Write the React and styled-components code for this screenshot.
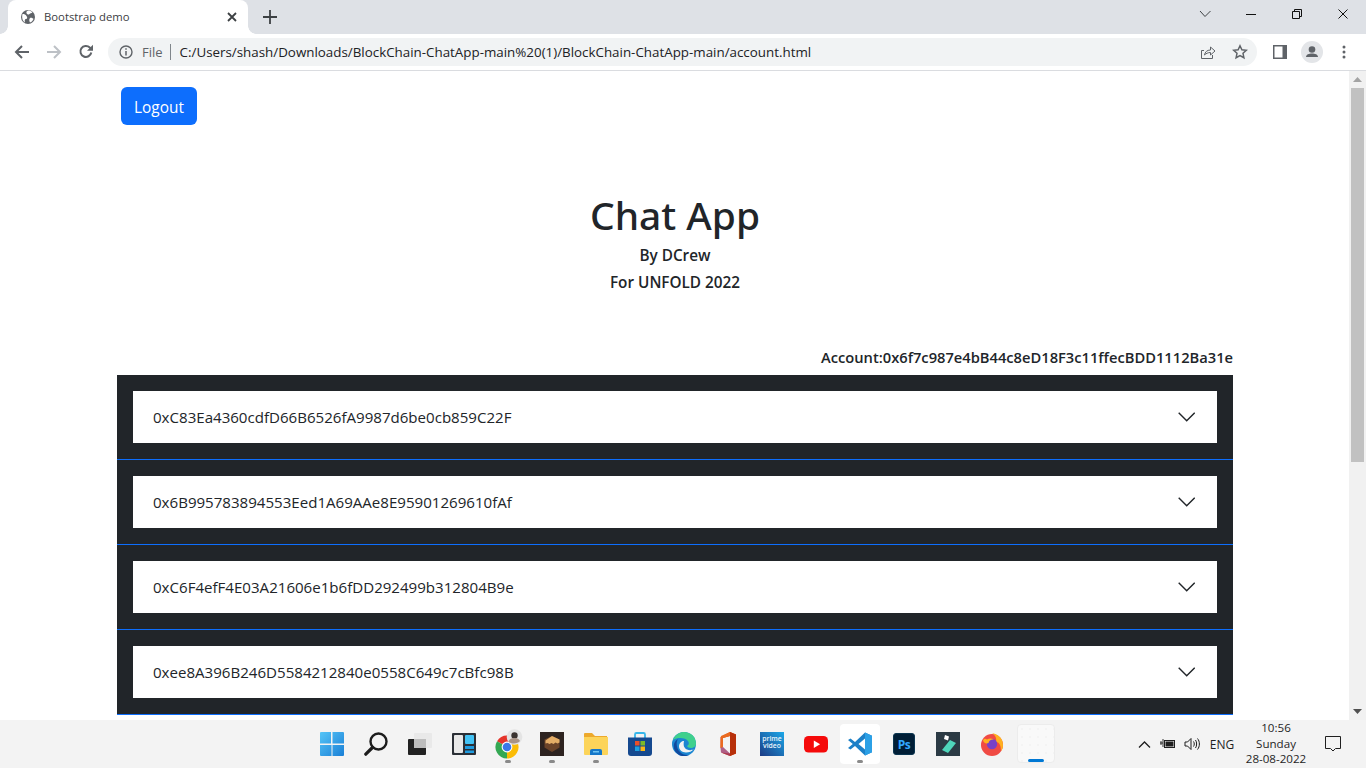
import React from "react";
import styled, { createGlobalStyle } from "styled-components";

const Global = createGlobalStyle`
  html, body { margin: 0; padding: 0; height: 100%; overflow: hidden; background: #fff; }
  * { box-sizing: border-box; }
  body { font-family: "Open Sans", "Noto Sans", sans-serif; color: #212529; }
`;

const Shell = styled.div`
  width: 1366px; height: 768px; display: flex; flex-direction: column; overflow: hidden;
`;
const TabStrip = styled.div`
  height: 34px; flex: none; background: #dee1e6; display: flex; align-items: stretch; padding-left: 8px;
`;
const Tab = styled.div`
  position: relative; width: 240px; background: #fff; border-radius: 8px 8px 0 0;
  display: flex; align-items: center; padding: 0 10px 1px 12px; gap: 8px;
  &::before, &::after { content: ""; position: absolute; bottom: 0; width: 8px; height: 8px; }
  &::before { left: -8px; background: radial-gradient(circle at 0 0, transparent 7.5px, #fff 8px); }
  &::after { right: -8px; background: radial-gradient(circle at 100% 0, transparent 7.5px, #fff 8px); }
`;
const TabTitle = styled.span`
  flex: 1; font-size: 11.3px; color: #3c4043; font-family: "Open Sans", sans-serif;
`;
const NewTab = styled.button`
  width: 28px; height: 28px; margin: 3px 0 0 8px; border: 0; background: none; padding: 0;
  display: flex; align-items: center; justify-content: center;
`;
const WindowControls = styled.div`
  margin-left: auto; display: flex; align-items: flex-start; height: 34px;
`;
const WinBtn = styled.div`
  width: 46px; height: 28px; display: flex; align-items: center; justify-content: center;
`;
const Toolbar = styled.div`
  height: 37px; flex: none; background: #fff; border-bottom: 1px solid #dadce0;
  display: flex; align-items: center; padding-left: 6px;
`;
const NavBtn = styled.div`
  width: 32px; height: 28px; display: flex; align-items: center; justify-content: center;
`;
const Omnibox = styled.div`
  width: 1149px; height: 28px; margin-left: 6px; background: #f1f3f4; border-radius: 14px;
  display: flex; align-items: center; padding: 0 1px 0 11px; font-size: 13.37px;
`;
const Scheme = styled.span`
  color: #5f6368; margin-left: 9px; font-size: 13px;
`;
const Sep = styled.span`
  width: 1px; height: 16px; background: #80868b; margin: 0 9px 0 7px;
`;
const Url = styled.span`
  flex: 1; color: #202124; white-space: nowrap;
`;
const OmniIcon = styled.div`
  width: 32px; height: 28px; display: flex; align-items: center; justify-content: center; flex: none;
`;
const ToolRight = styled.div`
  display: flex; align-items: center; margin-left: 7px;
`;
const ToolIcon = styled.div`
  width: 32px; height: 28px; display: flex; align-items: center; justify-content: center;
`;
const Viewport = styled.div`
  flex: 1; min-height: 0; display: flex; overflow: hidden;
`;
const Page = styled.main`
  flex: 1; min-width: 0; padding: 16px 0 0 117px; overflow: hidden;
`;
const Container = styled.div`
  width: 1116px;
`;
const LogoutButton = styled.button`
  display: block; margin-left: 4px; width: 76px; height: 38px; border: 0; border-radius: 6px;
  background: #0d6efd; color: #fff; font: 400 15.4px "Open Sans", sans-serif; padding: 2px 0 0;
`;
const Hero = styled.header`
  margin-top: 64px; text-align: center; height: 143px;
`;
const Title = styled.h1`
  margin: 0; font-family: "Noto Sans", "Open Sans", sans-serif; font-size: 38.9px; line-height: 52px; font-weight: 500; color: #212529;
`;
const Sub = styled.p`
  margin: 0; font-size: 15.3px; font-weight: 600; line-height: 27px; color: #212529;
  &:first-of-type { margin-top: 1px; }
`;
const Account = styled.div`
  margin-top: 13px; height: 24px; line-height: 24px; text-align: right; font-size: 14.7px; font-weight: 600; white-space: nowrap;
`;
const Accordion = styled.section`
  margin-top: 6px; background: #212529;
`;
const Item = styled.div`
  padding: 16px; height: 85px; border-bottom: 1px solid #0d6efd;
`;
const ItemButton = styled.div`
  height: 52px; background: #fff; display: flex; align-items: center; justify-content: space-between;
  padding: 0 22px 0 20px; font-size: 15.08px; color: #212529;
`;
const Scrollbar = styled.aside`
  width: 17px; flex: none; background: #f1f1f1; display: flex; flex-direction: column; align-items: center;
`;
const Arrow = styled.div`
  width: 17px; height: 17px; display: flex; align-items: center; justify-content: center; flex: none;
`;
const Thumb = styled.div`
  width: 13px; height: 374px; background: #c1c1c1;
`;
const Spacer = styled.div`
  flex: 1;
`;
const Taskbar = styled.footer`
  height: 48px; flex: none; background: #f3f3f3; display: flex; padding: 0 11px 0 310px;
`;
const TaskIcons = styled.div`
  display: flex; align-items: stretch;
`;
const TaskItem = styled.div`
  position: relative; width: 44px; display: flex; align-items: center; justify-content: center;
`;
const TaskGlyph = styled.span`
  position: relative; display: flex;
`;
const ActiveBg = styled.div`
  position: absolute; left: 2px; top: 4px; width: 40px; height: 40px; background: #fff; border-radius: 4px;
`;
const BlankBg = styled(ActiveBg)`
  left: 3px; width: 38px; height: 39px; border: 1px solid #ececec;
  background: #f9f9f9 radial-gradient(#efefef 0.5px, transparent 1px) 0 0 / 8px 8px;
`;
const Dot = styled.i`
  position: absolute; left: 50%; bottom: 5px; width: 6px; height: 3px; margin-left: -3px; border-radius: 2px; background: #8a8a8a;
`;
const Accent = styled.i`
  position: absolute; left: 10px; bottom: 0; width: 16px; height: 3px; border-radius: 2px; background: #0078d4;
`;
const PrimeBox = styled.div`
  width: 24px; height: 24px; background: linear-gradient(45deg, #1c3a84, #1ba7e8); color: #eaf6fc;
  font: 600 6.8px/7px "Open Sans", sans-serif; display: flex; flex-direction: column; align-items: center; padding-top: 3px;
`;
const Tray = styled.div`
  margin-left: auto; display: flex; align-items: center; color: #1f1f1f;
  font: 400 11.6px "Open Sans", sans-serif;
`;
const TrayIcon = styled.div`
  width: 24px; display: flex; align-items: center; justify-content: center;
`;
const Lang = styled.span`
  width: 34px; text-align: center; margin-left: 1px; font-size: 12px;
`;
const Clock = styled.div`
  width: 70px; margin-left: 2px; text-align: center; line-height: 15.5px; margin-top: -1px; white-space: nowrap;
`;
const Notify = styled.div`
  width: 44px; display: flex; justify-content: center;
`;

const Globe = () => (
  <svg width="16" height="16" viewBox="0 0 16 16">
    <circle cx="8" cy="8" r="7" fill="#5f6368" />
    <path d="M2.5 5c2 0 3 .5 4 2s1 3-.5 3-1.500 2-1 3.500C3 12.500 1.500 9 2.500 5zM8 1.500c2 0 3 .5 4.500 2-1.500 1-2 .5-3 1.500S7 5.500 6.500 4 7 2 8 1.500zM10 9c1.500-.5 3 .5 3.500 1-.5 1.500-2 3-3.500 3.500-1-1.500-1-3.500 0-4.500z" fill="#fff" />
  </svg>
);
const Line = ({ d, w = 16, h = 16, c = "#5f6368", s = 2 }) => (
  <svg width={w} height={h} viewBox={`0 0 ${w} ${h}`} fill="none" stroke={c} strokeWidth={s}><path d={d} /></svg>
);

const Windows = () => (
  <svg width="24" height="24" viewBox="0 0 24 24">
    <defs><linearGradient id="w" x1="0" y1="0" x2="1" y2="1"><stop offset="0" stopColor="#55c5f7" /><stop offset="1" stopColor="#1a7fd6" /></linearGradient></defs>
    <path d="M0 1a1 1 0 0 1 1-1h10v11.500H0zM12.500 0H23a1 1 0 0 1 1 1v10.500H12.500zM0 13h11.500v11H1a1 1 0 0 1-1-1zM12.500 13H24v10a1 1 0 0 1-1 1H12.500z" fill="url(#w)" />
  </svg>
);
const Search = () => (
  <svg width="24" height="24" viewBox="0 0 24 24" fill="none" stroke="#1c1c1c">
    <circle cx="14.500" cy="9.500" r="8" strokeWidth="2.400" /><path d="M8.500 15.500L1.800 22.200" strokeWidth="3.200" strokeLinecap="round" />
  </svg>
);
const TaskView = () => (
  <svg width="24" height="24" viewBox="0 0 24 24">
    <rect x="6" y="1" width="18" height="15" rx="1" fill="#e9e9e9" />
    <rect x="0" y="7" width="18" height="16" rx="1" fill="#222" />
    <rect x="6" y="7" width="12" height="9" fill="#bdbdbd" />
  </svg>
);
const Widgets = () => (
  <svg width="24" height="24" viewBox="0 0 24 24">
    <rect width="24" height="22" y="1" rx="1" fill="#2b2f36" />
    <rect x="2" y="3" width="9" height="18" rx="1" fill="#e8e8e8" />
    <rect x="13" y="3" width="9" height="9" rx="1" fill="#43c3f5" />
    <rect x="13" y="14" width="9" height="3" fill="#1f9ce0" />
    <rect x="13" y="18.500" width="9" height="2.500" fill="#1f9ce0" />
  </svg>
);
const Chrome = () => (
  <svg width="30" height="30" viewBox="-2 -1 30 30">
    <path d="M12 17L2.040 11.250A11.500 11.500 0 0 1 21.960 11.250z" fill="#e5352b" />
    <path d="M12 17L12 28.500A11.500 11.500 0 0 1 2.040 11.250z" fill="#34a853" />
    <path d="M12 17L21.960 11.250A11.500 11.500 0 0 1 12 28.500z" fill="#fbbc05" />
    <circle cx="12" cy="17" r="5.400" fill="#fff" /><circle cx="12" cy="17" r="4.300" fill="#3b78e7" />
    <circle cx="19.500" cy="7" r="7.800" fill="#e4e4e4" />
    <circle cx="19.500" cy="5.500" r="3.200" fill="#3a3330" />
    <path d="M13.500 11.500c1-3 3-3.500 6-3.500s4.500 1 5.500 3c-2 3-9 3.500-11.500.5z" fill="#a89386" />
  </svg>
);
const Block = () => (
  <svg width="24" height="24" viewBox="0 0 24 24">
    <rect width="24" height="24" fill="#2d2320" />
    <path d="M12 4l7.500 3.500v8L12 20l-7.500-4.500v-8z" fill="#6b4329" />
    <path d="M12 4l7.500 3.500v3l-2 1-2-1-2 1.500-2-1-2 1-2-1-2 .5v-3z" fill="#e4ad67" />
  </svg>
);
const Folder = () => (
  <svg width="24" height="24" viewBox="0 0 24 24">
    <path d="M0 2a1 1 0 0 1 1-1h7l3 3h12v3H0z" fill="#eda92c" />
    <path d="M0 5h24v17a1 1 0 0 1-1 1H1a1 1 0 0 1-1-1z" fill="#fcd45a" />
    <path d="M6 23v-4a2 2 0 0 1 2-2h8a2 2 0 0 1 2 2v4z" fill="#1577c9" />
    <rect x="9" y="19" width="6" height="1.500" fill="#6ec3f2" />
  </svg>
);
const Store = () => (
  <svg width="24" height="24" viewBox="0 0 24 24">
    <path d="M7 6V2.500A1.500 1.500 0 0 1 8.500 1h7A1.500 1.500 0 0 1 17 2.500V6" fill="none" stroke="#36b6ea" strokeWidth="1.800" />
    <path d="M0 5.500h24V21a3 3 0 0 1-3 3H3a3 3 0 0 1-3-3z" fill="#15498f" />
    <rect x="7" y="9" width="4.500" height="4.500" fill="#e8502a" /><rect x="12.500" y="9" width="4.500" height="4.500" fill="#7cb928" />
    <rect x="7" y="14.500" width="4.500" height="4.500" fill="#1ba1e2" /><rect x="12.500" y="14.500" width="4.500" height="4.500" fill="#fbb714" />
  </svg>
);
const Edge = () => (
  <svg width="24" height="24" viewBox="0 0 24 24">
    <circle cx="12" cy="12" r="12" fill="#1b86d1" />
    <path d="M1 8C3 2.500 8 0 12 0c7 0 12 5 12 11.500 0 3-2.500 4.500-5 4.500-2 0-3.500-1-4-2 2-1 2.500-3 1-5C14 6.500 7 4.500 1 8z" fill="#3fd08d" />
    <path d="M12 9c-3 0-5 2.500-5 5.500s3 6 7 6c3 0 6-1 8-3.500-2 1.500-5 1.500-7 .5-3-1.500-4-4-3-8.500z" fill="#f3f3f3" />
    <path d="M3 19c-2.500-5-1-10 3-12-2 3-2 9 2 13 2 2 5 3.500 9 3C12 25.500 6 24 3 19z" fill="#114a9e" />
  </svg>
);
const Office = () => (
  <svg width="24" height="24" viewBox="0 0 24 24">
    <path d="M14 0l6 2.500v19L14 24 5 20.500l9 1V4l-7 2v9l-2.500 1V5z" fill="#d83b01" />
    <path d="M14 0l6 2.500v19L14 24z" fill="#b7300a" />
    <path d="M4.500 16L7 15V6l7-2V0L5 4z" fill="#ea6a20" />
    <path d="M4.500 16l2.500-1 7 6.500V24l-9-3.500z" fill="#9e3a6a" opacity=".8" />
  </svg>
);
const Prime = () => (
  <PrimeBox>
    <span>prime</span>
    <span>video</span>
  </PrimeBox>
);
const YouTube = () => (
  <svg width="24" height="24" viewBox="0 0 24 24">
    <rect x="0" y="4" width="24" height="16.500" rx="4.500" fill="#f50a0a" />
    <path d="M9.800 8.500v7.500l6.300-3.750z" fill="#fff" />
  </svg>
);
const VSCode = () => (
  <svg width="24" height="24" viewBox="0 0 24 24">
    <path d="M17 .5l7 3.300v16.400L17 23.500 7 14l-4.500 3.500L0 16l4.800-4.100L0 8l2.500-1.500L7 10z" fill="#1d80c7" />
    <path d="M17 .5l7 3.300v16.400L17 23.500z" fill="#2ba0e6" />
    <path d="M17 6.500L10.500 12l6.500 5.500z" fill="#fff" />
  </svg>
);
const PS = styled.div`
  width: 22px; height: 22px; background: #001e36; border-radius: 3px; border: 1px solid #0a3550;
  color: #31a8ff; font: 700 12px "Open Sans", sans-serif; display: flex; align-items: center; justify-content: center; letter-spacing: -0.4px;
`;
const Filmora = () => (
  <svg width="24" height="24" viewBox="0 0 24 24">
    <rect width="24" height="24" fill="#2b3a44" />
    <path d="M9 3l4 1.500-1 4L8 7z" fill="#fff" />
    <path d="M14 8l6 3-8 10-6-3z" fill="#4fd6bb" />
  </svg>
);
const Firefox = () => (
  <svg width="24" height="24" viewBox="0 0 24 24">
    <circle cx="12" cy="13" r="11" fill="#f04a44" />
    <path d="M12 1c5 1 11 4 11 12 0 3-1 5-2 6 0-6-2-9-5-9 1-4-1-7-4-9z" fill="#ffb01f" />
    <circle cx="12" cy="12" r="5.200" fill="#7840c8" />
    <path d="M3 8c2-2 3-1 4-.5 2-1.500 5-1.500 7 0-3-.5-5 1-5.500 3.500C6 12 3.500 11 3 8z" fill="#ffb01f" />
  </svg>
);

const accounts = [
  "0xC83Ea4360cdfD66B6526fA9987d6be0cb859C22F",
  "0x6B995783894553Eed1A69AAe8E95901269610fAf",
  "0xC6F4efF4E03A21606e1b6fDD292499b312804B9e",
  "0xee8A396B246D5584212840e0558C649c7cBfc98B",
];

const taskApps = [
  { el: <Windows /> },
  { el: <Search /> },
  { el: <TaskView /> },
  { el: <Widgets /> },
  { el: <Chrome />, dot: true },
  { el: <Block />, dot: true },
  { el: <Folder />, dot: true },
  { el: <Store /> },
  { el: <Edge /> },
  { el: <Office /> },
  { el: <Prime /> },
  { el: <YouTube /> },
  { el: <VSCode />, dot: true, active: true },
  { el: <PS>Ps</PS> },
  { el: <Filmora /> },
  { el: <Firefox /> },
  { el: null, blank: true },
];

export default function App() {
  return (
    <Shell>
      <Global />
      <TabStrip>
        <Tab>
          <Globe />
          <TabTitle>Bootstrap demo</TabTitle>
          <Line d="M2 2l8 8M10 2l-8 8" w={12} h={12} c="#3c4043" s={1.8} />
        </Tab>
        <NewTab><Line d="M7 0v14M0 7h14" w={14} h={14} c="#3c4043" s={1.8} /></NewTab>
        <WindowControls>
          <WinBtn><Line d="M1 1l5 5.500L11.500 1" w={12} h={8} c="#3c4043" s={1} /></WinBtn>
          <WinBtn><Line d="M0 .5h10" w={10} h={1} c="#111" s={1} /></WinBtn>
          <WinBtn><Line d="M.5 2.500h7v7h-7zM2.500 2.500v-2h7v7h-2" w={10} h={10} c="#111" s={1} /></WinBtn>
          <WinBtn><Line d="M.5.5l9 9M9.500.5l-9 9" w={10} h={10} c="#111" s={1} /></WinBtn>
        </WindowControls>
      </TabStrip>
      <Toolbar>
        <NavBtn><Line d="M15 8H2M8 2L2 8l6 6" c="#5f6368" /></NavBtn>
        <NavBtn><Line d="M1 8h13M8 2l6 6-6 6" c="#bdc1c6" /></NavBtn>
        <NavBtn>
          <svg width="16" height="16" viewBox="0 0 16 16" fill="none"><path d="M13.300 8.500A5.500 5.500 0 1 1 11.800 3.500L14 5.500" stroke="#5f6368" strokeWidth="2" /><path d="M15 0.800v6h-6z" fill="#5f6368" /></svg>
        </NavBtn>
        <Omnibox>
          <svg width="14" height="14" viewBox="0 0 14 14" fill="none"><circle cx="7" cy="7" r="6" stroke="#5f6368" strokeWidth="1.400" /><path d="M7 6v4.500M7 3.300v1.500" stroke="#5f6368" strokeWidth="1.500" /></svg>
          <Scheme>File</Scheme>
          <Sep />
          <Url>C:/Users/shash/Downloads/BlockChain-ChatApp-main%20(1)/BlockChain-ChatApp-main/account.html</Url>
          <OmniIcon>
            <svg width="16" height="16" viewBox="0 0 16 16" fill="none" stroke="#5f6368" strokeWidth="1"><path d="M4 6.500H1.500v8h11V11" /><path d="M4.500 11c.5-3 2.500-5 6-5V3l4.500 4-4.500 4V8.500c-2.500 0-4.500 1-6 2.500z" /></svg>
          </OmniIcon>
          <OmniIcon>
            <svg width="16" height="16" viewBox="0 0 16 16" fill="none" stroke="#5f6368" strokeWidth="1.500"><path d="M8 1.800l1.900 4 4.400.5-3.300 3 .9 4.400L8 11.500l-3.900 2.200.9-4.400-3.300-3 4.400-.5z" /></svg>
          </OmniIcon>
        </Omnibox>
        <ToolRight>
          <ToolIcon>
            <svg width="14" height="14" viewBox="0 0 14 14"><rect width="14" height="14" fill="#5f6368" /><rect x="1.500" y="1.500" width="8" height="11" fill="#fff" /></svg>
          </ToolIcon>
          <ToolIcon>
            <svg width="22" height="22" viewBox="0 0 22 22"><circle cx="11" cy="11" r="11" fill="#e3e5e8" /><circle cx="11" cy="8.500" r="3.300" fill="#5f6368" /><path d="M5 16c0-2.500 3-3.500 6-3.500s6 1 6 3.500z" fill="#5f6368" /></svg>
          </ToolIcon>
          <ToolIcon>
            <svg width="4" height="14" viewBox="0 0 4 14" fill="#5f6368"><circle cx="2" cy="2" r="1.500" /><circle cx="2" cy="7" r="1.500" /><circle cx="2" cy="12" r="1.500" /></svg>
          </ToolIcon>
        </ToolRight>
      </Toolbar>
      <Viewport>
        <Page>
          <Container>
            <LogoutButton>Logout</LogoutButton>
            <Hero>
              <Title>Chat App</Title>
              <Sub>By DCrew</Sub>
              <Sub>For UNFOLD 2022</Sub>
            </Hero>
            <Account>Account:0x6f7c987e4bB44c8eD18F3c11ffecBDD1112Ba31e</Account>
            <Accordion>
              {accounts.map(a => (
                <Item key={a}>
                  <ItemButton>
                    <span>{a}</span>
                    <Line d="M.7.7l8 8 8-8" w={17} h={10} c="#212529" s={1.400} />
                  </ItemButton>
                </Item>
              ))}
            </Accordion>
          </Container>
        </Page>
        <Scrollbar>
          <Arrow><svg width="9" height="5"><path d="M4.500 0L9 5H0z" fill="#a3a3a3" /></svg></Arrow>
          <Thumb />
          <Spacer />
          <Arrow><svg width="9" height="5"><path d="M4.500 5L9 0H0z" fill="#505050" /></svg></Arrow>
        </Scrollbar>
      </Viewport>
      <Taskbar>
        <TaskIcons>
          {taskApps.map((t, i) => (
            <TaskItem key={i}>
              {t.active && <ActiveBg />}
              {t.blank && <BlankBg><Accent /></BlankBg>}
              {t.el && <TaskGlyph>{t.el}</TaskGlyph>}
              {t.dot && <Dot />}
            </TaskItem>
          ))}
        </TaskIcons>
        <Tray>
          <TrayIcon><Line d="M1 7.500l5.500-5.500L12 7.500" w={13} h={9} c="#1f1f1f" s={1.300} /></TrayIcon>
          <TrayIcon>
            <svg width="16" height="12" viewBox="0 0 16 12" fill="none" stroke="#1f1f1f"><path d="M0 5h3M1 3v4M3 1v8" strokeWidth=".9" /><rect x="4.500" y="2.500" width="10" height="7" strokeWidth="1" /><rect x="5.500" y="3.500" width="8" height="5" fill="#1f1f1f" stroke="none" /></svg>
          </TrayIcon>
          <TrayIcon>
            <svg width="17" height="14" viewBox="0 0 17 14" fill="none" stroke="#1f1f1f" strokeWidth="1"><path d="M1 5h2.500L7 1.500v11L3.500 9H1zM9.500 4.500c1 1.500 1 3.500 0 5M11.500 3c1.500 2 1.500 6 0 8M13.500 1.500c2.500 3 2.500 8 0 11" /></svg>
          </TrayIcon>
          <Lang>ENG</Lang>
          <Clock>10:56<br />Sunday<br />28-08-2022</Clock>
          <Notify>
            <svg width="16" height="16" viewBox="0 0 16 16" fill="none" stroke="#1f1f1f"><path d="M.5.500h15v12h-5L8 15l-2.500-2.500h-5z" /></svg>
          </Notify>
        </Tray>
      </Taskbar>
    </Shell>
  );
}
